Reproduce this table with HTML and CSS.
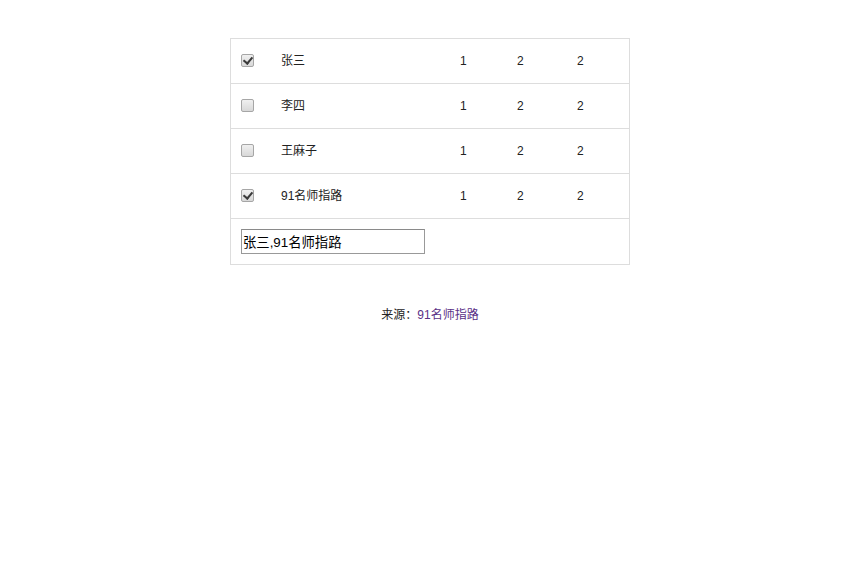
FILE: index.html
```html
<!DOCTYPE html>
<html lang="zh">
<head>
<meta charset="utf-8">
<title>表格</title>
<link rel="stylesheet" href="styles.css">
</head>
<body>
<div class="page">
  <div class="table">
    <div class="row">
      <div class="cell check"><input type="checkbox" class="cb" checked></div>
      <div class="cell">张三</div>
      <div class="cell">1</div>
      <div class="cell">2</div>
      <div class="cell">2</div>
    </div>
    <div class="row">
      <div class="cell check"><input type="checkbox" class="cb"></div>
      <div class="cell">李四</div>
      <div class="cell">1</div>
      <div class="cell">2</div>
      <div class="cell">2</div>
    </div>
    <div class="row">
      <div class="cell check"><input type="checkbox" class="cb"></div>
      <div class="cell">王麻子</div>
      <div class="cell">1</div>
      <div class="cell">2</div>
      <div class="cell">2</div>
    </div>
    <div class="row">
      <div class="cell check"><input type="checkbox" class="cb" checked></div>
      <div class="cell">91名师指路</div>
      <div class="cell">1</div>
      <div class="cell">2</div>
      <div class="cell">2</div>
    </div>
    <div class="row last">
      <input type="text" class="result" value="张三,91名师指路">
    </div>
  </div>
  <p class="source">来源：<a href="#" class="link">91名师指路</a></p>
</div>
</body>
</html>
```
FILE: styles.css
```css
html, body {
  margin: 0;
  padding: 0;
  background: #fff;
}
body {
  font-family: "Liberation Sans", "Noto Sans CJK SC", sans-serif;
  font-size: 12px;
  color: #222;
}
.page {
  width: 400px;
  padding-top: 38px;
  margin-left: 230px;
}
.table {
  border: 1px solid #ddd;
}
.row {
  display: grid;
  grid-template-columns: 50px 179px 57px 60px 52px;
  height: 44px;
  align-items: center;
  border-bottom: 1px solid #ddd;
}
.row.last {
  display: flex;
  height: 45px;
  border-bottom: none;
  padding-left: 10px;
}
.cell {
  line-height: 16px;
}
.check {
  padding-left: 10px;
  padding-bottom: 1px;
  display: flex;
  align-items: center;
}
.cb {
  appearance: none;
  -webkit-appearance: none;
  width: 13px;
  height: 13px;
  margin: 0;
  border: 1px solid #a6a6a6;
  border-radius: 2px;
  background: linear-gradient(#f0f0f0, #d8d8d8);
  box-sizing: border-box;
  position: relative;
}
.cb:checked::after {
  content: "";
  position: absolute;
  left: 3px;
  top: 0px;
  width: 4px;
  height: 7px;
  border-right: 2px solid #3a3a3a;
  border-bottom: 2px solid #3a3a3a;
  transform: rotate(40deg);
}
.result {
  width: 184px;
  height: 25px;
  box-sizing: border-box;
  border: 1px solid #999;
  border-top-color: #8a8a8a;
  padding: 1px 1px;
  margin: 0;
  font-family: "Liberation Sans", "Noto Sans CJK SC", sans-serif;
  font-size: 13.33px;
  color: #000;
  outline: none;
}
.source {
  margin: 42px 0 0;
  text-align: center;
  line-height: 16px;
}
.link {
  color: #5a2f86;
  text-decoration: none;
}
```
